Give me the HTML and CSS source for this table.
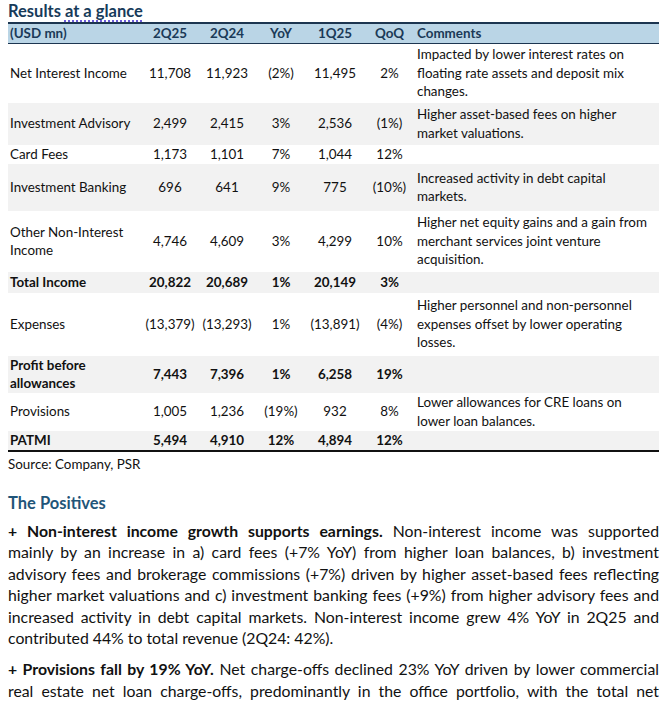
FILE: index.html
```html
<!DOCTYPE html>
<html>
<head>
<meta charset="utf-8">
<link rel="stylesheet" href="styles.css">
</head>
<body>
<h1 class="title">Results <span class="mark">at a glance</span></h1>
<table class="results">
  <colgroup>
    <col class="c-label"><col class="c-a"><col class="c-b"><col class="c-b"><col class="c-b"><col class="c-c"><col class="c-cm">
  </colgroup>
  <thead>
    <tr><th class="lbl">(USD mn)</th><th>2Q25</th><th>2Q24</th><th>YoY</th><th>1Q25</th><th>QoQ</th><th class="cm">Comments</th></tr>
  </thead>
  <tbody>
    <tr class="h59"><td class="lbl">Net Interest Income</td><td>11,708</td><td>11,923</td><td>(2%)</td><td>11,495</td><td>2%</td><td class="cm">Impacted by lower interest rates on floating rate assets and deposit mix changes.</td></tr>
    <tr class="h42 alt"><td class="lbl">Investment Advisory</td><td>2,499</td><td>2,415</td><td>3%</td><td>2,536</td><td>(1%)</td><td class="cm">Higher asset-based fees on higher market valuations.</td></tr>
    <tr class="h19"><td class="lbl">Card Fees</td><td>1,173</td><td>1,101</td><td>7%</td><td>1,044</td><td>12%</td><td class="cm"></td></tr>
    <tr class="h47 alt"><td class="lbl">Investment Banking</td><td>696</td><td>641</td><td>9%</td><td>775</td><td>(10%)</td><td class="cm">Increased activity in debt capital markets.</td></tr>
    <tr class="h61"><td class="lbl">Other Non-Interest Income</td><td>4,746</td><td>4,609</td><td>3%</td><td>4,299</td><td>10%</td><td class="cm">Higher net equity gains and a gain from merchant services joint venture acquisition.</td></tr>
    <tr class="h21 alt bold"><td class="lbl">Total Income</td><td>20,822</td><td>20,689</td><td>1%</td><td>20,149</td><td>3%</td><td class="cm"></td></tr>
    <tr class="h63"><td class="lbl">Expenses</td><td>(13,379)</td><td>(13,293)</td><td>1%</td><td>(13,891)</td><td>(4%)</td><td class="cm">Higher personnel and non-personnel expenses offset by lower operating losses.</td></tr>
    <tr class="h37 alt bold"><td class="lbl">Profit before allowances</td><td>7,443</td><td>7,396</td><td>1%</td><td>6,258</td><td>19%</td><td class="cm"></td></tr>
    <tr class="h38"><td class="lbl">Provisions</td><td>1,005</td><td>1,236</td><td>(19%)</td><td>932</td><td>8%</td><td class="cm">Lower allowances for CRE loans on lower loan balances.</td></tr>
    <tr class="h19 alt bold last"><td class="lbl">PATMI</td><td>5,494</td><td>4,910</td><td>12%</td><td>4,894</td><td>12%</td><td class="cm"></td></tr>
  </tbody>
</table>
<p class="source">Source: Company, PSR</p>
<h2 class="section">The Positives</h2>
<p class="para"><span class="ln"><b>+ Non-interest income growth supports earnings.</b> Non-interest income was supported</span><span class="ln">mainly by an increase in a) card fees (+7% YoY) from higher loan balances, b) investment</span><span class="ln">advisory fees and brokerage commissions (+7%) driven by higher asset-based fees reflecting</span><span class="ln">higher market valuations and c) investment banking fees (+9%) from higher advisory fees and</span><span class="ln">increased activity in debt capital markets. Non-interest income grew 4% YoY in 2Q25 and</span><span class="end">contributed 44% to total revenue (2Q24: 42%).</span></p>
<p class="para"><span class="ln"><b>+ Provisions fall by 19% YoY.</b> Net charge-offs declined 23% YoY driven by lower commercial</span><span class="ln">real estate net loan charge-offs, predominantly in the office portfolio, with the total net</span></p>
</body>
</html>
```

FILE: styles.css
```css
html, body {
  margin: 0;
  padding: 0;
  background: #fff;
}
body {
  padding: 0 5px 0 8px;
  font-family: Lato, "Open Sans", sans-serif;
  color: #111;
}
.title {
  margin: 0;
  height: 22px;
  font-size: 16.5px;
  line-height: 22px;
  font-weight: 700;
  color: #173b5a;
}
.mark {
  text-decoration: underline dotted #6a5cd8 2px;
  text-underline-offset: 3px;
}
.results {
  width: 651px;
  table-layout: fixed;
  border-collapse: separate;
  border-spacing: 0;
  font-size: 13.4px;
  line-height: 18.5px;
}
.c-label { width: 132px; }
.c-a { width: 60px; }
.c-b { width: 54px; }
.c-c { width: 55px; }
.c-cm { width: 242px; }
.results th {
  background: #bad5e6;
  color: #1b3a58;
  font-weight: 700;
  text-align: center;
  height: 17px;
  padding: 0;
  border-top: 2px solid #1c3550;
  border-bottom: 1px solid #1c3550;
  white-space: nowrap;
}
.results td {
  padding: 0;
  text-align: center;
  vertical-align: middle;
  white-space: nowrap;
}
.results .lbl {
  text-align: left;
  padding-left: 2px;
  padding-right: 8px;
  white-space: normal;
}
.results .cm {
  text-align: left;
  white-space: normal;
  padding-right: 2px;
}
.alt td { background: #f2f2f2; }
.bold td { font-weight: 700; }
.last td { border-bottom: 2px solid #111; }
.h19 td { height: 19px; }
.h21 td { height: 21px; }
.h37 td { height: 37px; }
.h38 td { height: 38px; }
.h42 td { height: 42px; }
.h47 td { height: 47px; }
.h59 td { height: 59px; }
.h61 td { height: 61px; }
.h63 td { height: 63px; }
.source {
  margin: 4px 0 0;
  font-size: 13.4px;
  line-height: 17px;
}
.section {
  margin: 20px 0 0;
  font-size: 16.5px;
  line-height: 20px;
  font-weight: 700;
  color: #1f5579;
}
.para {
  margin: 7px 0 0;
  font-size: 15.8px;
  line-height: 21.5px;
}
.para + .para { margin-top: 9.5px; }
.ln {
  display: block;
  white-space: nowrap;
  text-align: justify;
  text-align-last: justify;
}
.end {
  display: block;
  text-align: left;
}
```
